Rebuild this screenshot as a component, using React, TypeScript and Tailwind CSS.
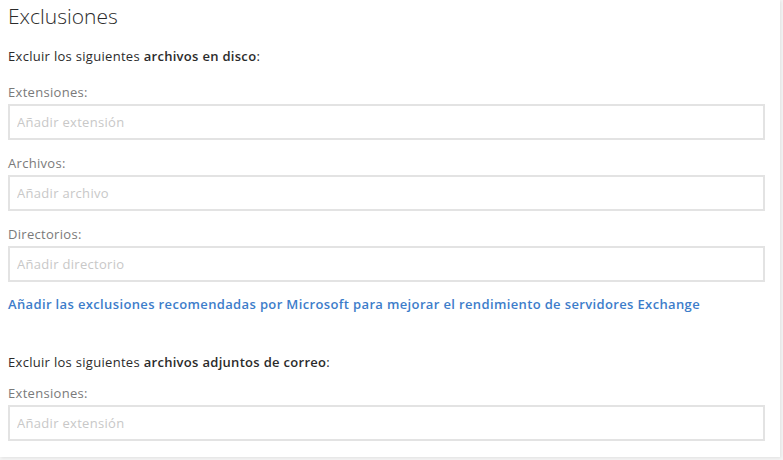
const FONT = { fontFamily: '"Open Sans", "Liberation Sans", sans-serif' };

function Field({ label, placeholder }: { label: string; placeholder: string }) {
  return (
    <div className="flex flex-col">
      <label className="h-[20px] text-[13px] leading-[20px] tracking-[0.3px] text-[#7a7a7a]">{label}</label>
      <input
        className="mt-[2px] h-[36px] w-[757px] border-2 border-[#e3e3e3] px-[7px] text-[13px] tracking-[0.3px] text-[#555] outline-none placeholder:text-[#c8c8c8]"
        placeholder={placeholder}
      />
    </div>
  );
}

export default function App() {
  return (
    <div className="h-[460px] w-[783px] overflow-hidden bg-[#f4f4f4]" style={FONT}>
      <div className="h-[457px] w-[780px] bg-white px-2 shadow-[1px_1px_3px_rgba(0,0,0,0.08)]">
        <h1 className="pt-[2px] text-[21px] font-light leading-[28px] text-[#2b2b2b]">Exclusiones</h1>

        <p className="mt-[16px] h-[20px] text-[13px] leading-[20px] tracking-[0.3px] text-[#2b2b2b]">
          Excluir los siguientes <span className="font-semibold">archivos en disco</span>:
        </p>

        <div className="mt-[16px] flex flex-col gap-[13px]">
          <Field label="Extensiones:" placeholder="Añadir extensión" />
          <Field label="Archivos:" placeholder="Añadir archivo" />
          <Field label="Directorios:" placeholder="Añadir directorio" />
        </div>

        <a href="#" className="mt-[12px] block h-[20px] text-[13px] font-semibold leading-[20px] tracking-[0.36px] text-[#3d7dca]">
          Añadir las exclusiones recomendadas por Microsoft para mejorar el rendimiento de servidores Exchange
        </a>

        <p className="mt-[38px] h-[20px] text-[13px] leading-[20px] tracking-[0.3px] text-[#2b2b2b]">
          Excluir los siguientes <span className="font-semibold">archivos adjuntos de correo</span>:
        </p>

        <div className="mt-[11px]">
          <Field label="Extensiones:" placeholder="Añadir extensión" />
        </div>
      </div>
    </div>
  );
}
